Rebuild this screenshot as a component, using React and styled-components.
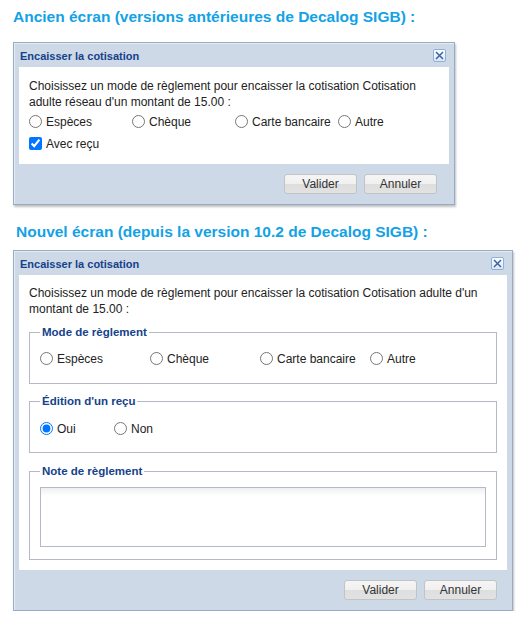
import React from "react";
import styled, { createGlobalStyle } from "styled-components";

const GlobalStyle = createGlobalStyle`
  html, body {
    margin: 0;
    padding: 0;
    background: #fff;
  }
  body {
    font-family: "Liberation Sans", Arial, sans-serif;
  }
`;

const Page = styled.div`
  padding: 7px 0 0 13px;
  width: 527px;
  box-sizing: border-box;
`;

const Heading = styled.h2`
  margin: ${(p) => p.$top || 0}px 0 0 ${(p) => p.$indent || 0}px;
  font-family: "Liberation Sans", Arial, sans-serif;
  font-weight: bold;
  font-size: 15.5px;
  line-height: 20px;
  color: #12a2e6;
`;

const Window = styled.div`
  width: ${(p) => p.$width}px;
  margin-top: ${(p) => p.$top}px;
  box-sizing: border-box;
  border: 1px solid #98abc6;
  background: #cdd9e6;
  box-shadow: 1px 2px 2px rgba(0, 0, 0, 0.25), inset 1px 1px 0 #e4ecf5;
  font-family: "Liberation Sans", Arial, sans-serif;
`;

const TitleBar = styled.div`
  display: flex;
  align-items: center;
  justify-content: space-between;
  height: 24px;
  padding: 1px 8px 0 6px;
  box-sizing: border-box;
`;

const Title = styled.span`
  font-weight: bold;
  font-size: 11px;
  color: #15428b;
`;

const CloseBtn = styled.span`
  display: flex;
  align-items: center;
  justify-content: center;
  width: 13px;
  height: 13px;
  box-sizing: border-box;
  border: 1px solid #8fb0dc;
  border-radius: 2px;
  background: linear-gradient(#ffffff, #dbe6f4);
`;

const Body = styled.div`
  margin: 0 5px;
  background: #fff;
  padding: ${(p) => p.$pad};
  font-size: 12px;
  color: #222;
`;

const Intro = styled.p`
  margin: 0;
  line-height: 16px;
`;

const RadioRow = styled.div`
  display: grid;
  grid-template-columns: repeat(${(p) => p.$count}, ${(p) => p.$col}px);
  margin-top: ${(p) => p.$top || 0}px;
`;

const Choice = styled.label`
  display: flex;
  align-items: center;
  gap: 4px;
  height: 17px;
  font-size: 12px;
  color: #222;
  white-space: nowrap;

  input {
    margin: 0;
    width: 13px;
    height: 13px;
  }
`;

const Group = styled.fieldset`
  margin: ${(p) => p.$top || 0}px 0 0;
  padding: ${(p) => p.$pad};
  border: 1px solid #b5b8c8;
  min-width: 0;
`;

const Legend = styled.legend`
  padding: 0 2px;
  font-weight: bold;
  font-size: 11.5px;
  line-height: 14px;
  color: #15428b;
`;

const Note = styled.textarea`
  display: block;
  width: 100%;
  height: 60px;
  box-sizing: border-box;
  margin: 0;
  border: 1px solid #b5b8c8;
  background: linear-gradient(#eef0f0, #fff 8px);
  resize: none;
  font-family: inherit;
`;

const Footer = styled.div`
  display: flex;
  justify-content: flex-end;
  gap: 7px;
  padding: ${(p) => p.$pad};
`;

const Button = styled.button`
  width: 73px;
  height: 20px;
  padding: 0;
  border: 1px solid #c3c3c3;
  border-radius: 3px;
  background: linear-gradient(#f5f5f5 0%, #f0f0f0 50%, #dedede 51%, #e2e2e2 100%);
  font-family: "Liberation Sans", Arial, sans-serif;
  font-size: 12px;
  color: #333;
`;

const CloseIcon = () => (
  <svg width="9" height="9" viewBox="0 0 9 9">
    <path d="M1 1L8 8M8 1L1 8" stroke="#3a62a8" strokeWidth="1.5" />
  </svg>
);

const Dialog = ({ width, top, children, footerPad }) => (
  <Window $width={width} $top={top}>
    <TitleBar>
      <Title>Encaisser la cotisation</Title>
      <CloseBtn>
        <CloseIcon />
      </CloseBtn>
    </TitleBar>
    {children}
    <Footer $pad={footerPad}>
      <Button>Valider</Button>
      <Button>Annuler</Button>
    </Footer>
  </Window>
);

const modes = ["Espèces", "Chèque", "Carte bancaire", "Autre"];

const App = () => (
  <>
    <GlobalStyle />
    <Page>
      <Heading>Ancien écran (versions antérieures de Decalog SIGB) :</Heading>
      <Dialog width={442} top={15} footerPad="10px 17px 10px 0">
        <Body $pad="11px 10px 12px 10px">
          <Intro>
            Choisissez un mode de règlement pour encaisser la cotisation Cotisation
            <br />
            adulte réseau d'un montant de 15.00 :
          </Intro>
          <RadioRow $count={4} $col={103} $top={3}>
            {modes.map((m) => (
              <Choice key={m}>
                <input type="radio" name="old" readOnly />
                {m}
              </Choice>
            ))}
          </RadioRow>
          <RadioRow $count={1} $col={120} $top={5}>
            <Choice>
              <input type="checkbox" defaultChecked />
              Avec reçu
            </Choice>
          </RadioRow>
        </Body>
      </Dialog>

      <Heading $top={17} $indent={3}>
        Nouvel écran (depuis la version 10.2 de Decalog SIGB) :
      </Heading>
      <Dialog width={500} top={8} footerPad="10px 15px 10px 0">
        <Body $pad="10px 10px 10px 10px">
          <Intro>
            Choisissez un mode de règlement pour encaisser la cotisation Cotisation adulte d'un
            <br />
            montant de 15.00 :
          </Intro>
          <Group $top={8} $pad="11px 10px 16px">
            <Legend>Mode de règlement</Legend>
            <RadioRow $count={4} $col={110}>
              {modes.map((m) => (
                <Choice key={m}>
                  <input type="radio" name="mode" readOnly />
                  {m}
                </Choice>
              ))}
            </RadioRow>
          </Group>
          <Group $top={10} $pad="12px 10px 15px">
            <Legend>Édition d'un reçu</Legend>
            <RadioRow $count={2} $col={74}>
              <Choice>
                <input type="radio" name="recu" defaultChecked />
                Oui
              </Choice>
              <Choice>
                <input type="radio" name="recu" />
                Non
              </Choice>
            </RadioRow>
          </Group>
          <Group $top={11} $pad="9px 10px 12px">
            <Legend>Note de règlement</Legend>
            <Note />
          </Group>
        </Body>
      </Dialog>
    </Page>
  </>
);

export default App;
